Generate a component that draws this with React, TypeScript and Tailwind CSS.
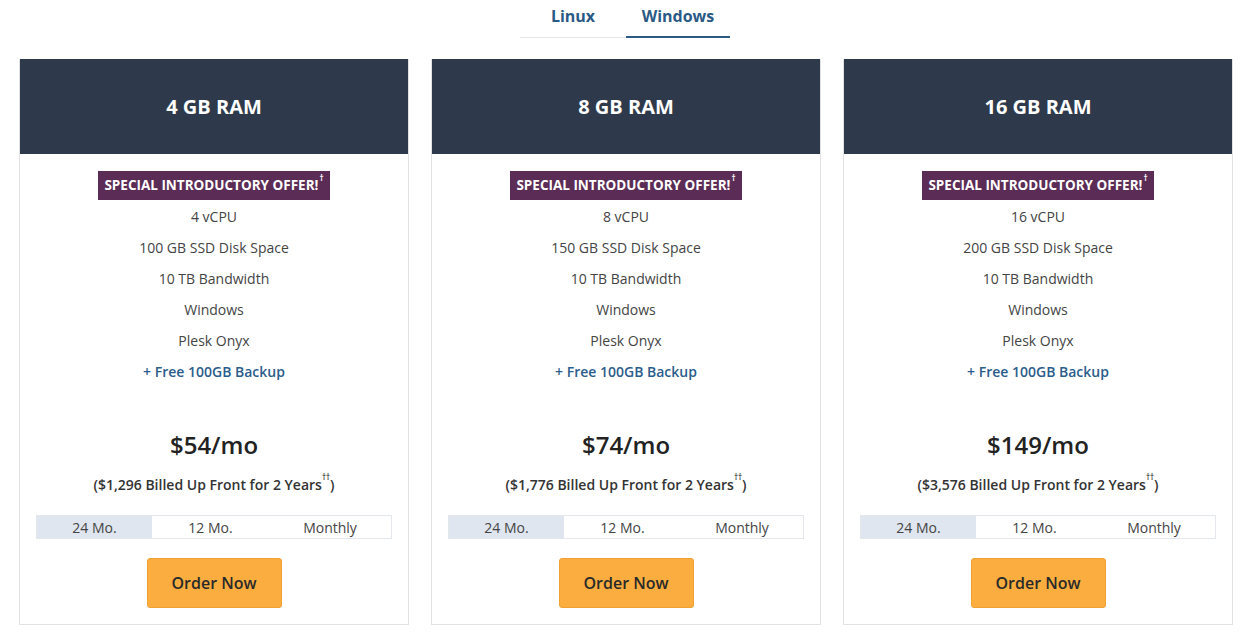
import React from "react";

const plans = [
  { ram: "4 GB RAM", cpu: "4 vCPU", disk: "100 GB SSD Disk Space", price: "$54/mo", billed: "$1,296" },
  { ram: "8 GB RAM", cpu: "8 vCPU", disk: "150 GB SSD Disk Space", price: "$74/mo", billed: "$1,776" },
  { ram: "16 GB RAM", cpu: "16 vCPU", disk: "200 GB SSD Disk Space", price: "$149/mo", billed: "$3,576" },
];

function Card({ p }: { p: (typeof plans)[number] }) {
  return (
    <div className="w-[390px] border border-[#e2e2e2] bg-white flex flex-col items-center">
      <div className="w-full h-[95px] -mt-px bg-[#2e3a4b] flex items-center justify-center">
        <span className="text-white text-[20px] font-bold leading-none">{p.ram}</span>
      </div>
      <div className="mt-[17px] h-[29px] px-[6px] bg-[#5b2c55] flex items-center text-white text-[13.5px] font-bold leading-none">
        SPECIAL INTRODUCTORY OFFER!<sup className="text-[8px] -mt-[8px] ml-px">†</sup>
      </div>
      <div className="mt-[1px] flex flex-col items-center text-[14px] text-[#444]">
        <div className="h-[31px] flex items-center">{p.cpu}</div>
        <div className="h-[31px] flex items-center">{p.disk}</div>
        <div className="h-[31px] flex items-center">10 TB Bandwidth</div>
        <div className="h-[31px] flex items-center">Windows</div>
        <div className="h-[31px] flex items-center">Plesk Onyx</div>
        <div className="h-[31px] flex items-center text-[#2b5d8d] font-semibold">+ Free 100GB Backup</div>
      </div>
      <div className="mt-[42px] h-[32px] flex items-center text-[24px] font-semibold text-[#222]">{p.price}</div>
      <div className="mt-[13px] h-[20px] flex items-center text-[14px] font-semibold text-[#333]">
        ({p.billed} Billed Up Front for 2 Years<sup className="text-[8px] -mt-[6px]">††</sup>)
      </div>
      <div className="mt-[21px] w-[356px] h-[24px] border border-[#e4e7eb] flex text-[14px] text-[#444]">
        <div className="w-[115px] bg-[#dfe6ef] flex items-center justify-center">24 Mo.</div>
        <div className="w-[117px] flex items-center justify-center">12 Mo.</div>
        <div className="flex-1 flex items-center justify-center">Monthly</div>
      </div>
      <button className="mt-[19px] mb-[16px] w-[135px] h-[50px] rounded-[3px] bg-[#fbae3f] border border-[#f0a030] text-[16px] font-semibold text-[#2a2a2a]">
        Order Now
      </button>
    </div>
  );
}

export default function App() {
  return (
    <div className="w-[1256px] h-[635px] bg-white overflow-hidden" style={{ fontFamily: '"Open Sans", "Noto Sans", sans-serif' }}>
      <div className="flex justify-center pr-[6px]">
        <div className="w-[106px] h-[38px] border-b border-[#e4e6ea] flex justify-center pt-[4px] text-[16px] font-bold text-[#2b5a86] leading-6">Linux</div>
        <div className="w-[104px] h-[38px] border-b-2 border-[#2b5a86] flex justify-center pt-[4px] text-[16px] font-bold text-[#2b5a86] leading-6">Windows</div>
      </div>
      <div className="mt-[21px] flex gap-[22px] pl-[19px] items-start">
        {plans.map((p) => (
          <Card key={p.ram} p={p} />
        ))}
      </div>
    </div>
  );
}
